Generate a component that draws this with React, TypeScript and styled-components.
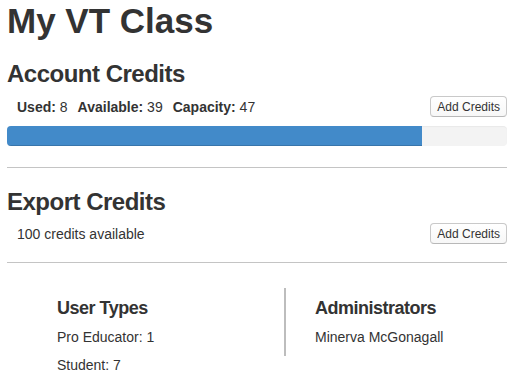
import styled, { createGlobalStyle } from 'styled-components';

const GlobalStyle = createGlobalStyle`
  html, body {
    margin: 0;
    padding: 0;
    background: #fff;
  }
  body {
    font-family: 'Liberation Sans', Arial, sans-serif;
    color: #333;
    font-size: 14px;
  }
`;

const Page = styled.div`
  margin: 0 12px 0 7px;
  padding-top: 1px;
`;

const Title = styled.h1`
  margin: 0;
  font-size: 35px;
  line-height: 40px;
  font-weight: bold;
`;

const SectionTitle = styled.h2<{ $top: number }>`
  margin: ${(p) => p.$top}px 0 0;
  font-size: 24px;
  line-height: 28px;
  font-weight: bold;
  letter-spacing: -0.5px;
`;

const CreditRow = styled.div<{ $top: number }>`
  display: flex;
  align-items: center;
  justify-content: space-between;
  height: 21px;
  margin-top: ${(p) => p.$top}px;
  padding-left: 10px;
`;

const Stats = styled.div`
  display: flex;
  gap: 10px;
  line-height: 20px;
`;

const Stat = styled.span`
  b {
    font-weight: bold;
  }
`;

const AddButton = styled.button`
  height: 21px;
  padding: 0 6px;
  font-family: 'Liberation Sans', Arial, sans-serif;
  font-size: 12px;
  color: #333;
  background: linear-gradient(#ffffff, #f7f7f7);
  border: 1px solid #c9c9c9;
  border-bottom-color: #b8b8b8;
  border-radius: 4px;
  cursor: pointer;
`;

const Progress = styled.div`
  margin-top: 9px;
  height: 20px;
  background: #f3f3f3;
  border-radius: 4px;
  box-shadow: inset 0 1px 1px rgba(0, 0, 0, 0.04);
  overflow: hidden;
`;

const ProgressFill = styled.div`
  height: 100%;
  background: #428ac9;
  box-shadow: inset 0 -1px 0 rgba(0, 0, 0, 0.15);
`;

const Rule = styled.hr<{ $top: number }>`
  margin: ${(p) => p.$top}px 0 0;
  border: 0;
  border-top: 1px solid #c4c4c4;
`;

const PlainText = styled.span`
  line-height: 20px;
`;

const Summary = styled.div`
  display: grid;
  grid-template-columns: 277px 1fr;
  align-items: start;
  margin-top: 25px;
`;

const Column = styled.div<{ $divider?: boolean }>`
  padding: 9px 0 1px ${(p) => (p.$divider ? 29 : 50)}px;
  border-left: ${(p) => (p.$divider ? '2px solid #bdbdbd' : 'none')};
`;

const ColumnTitle = styled.h3`
  margin: 0 0 8px;
  font-size: 18px;
  line-height: 22px;
  font-weight: bold;
  letter-spacing: -0.5px;
`;

const Line = styled.p`
  margin: 0 0 8px;
  line-height: 20px;
`;

const used = 8;
const available = 39;
const capacity = 47;

export default function App() {
  return (
    <>
      <GlobalStyle />
      <Page>
        <Title>My VT Class</Title>

        <SectionTitle $top={19}>Account Credits</SectionTitle>
        <CreditRow $top={8}>
          <Stats>
            <Stat>
              <b>Used:</b> {used}
            </Stat>
            <Stat>
              <b>Available:</b> {available}
            </Stat>
            <Stat>
              <b>Capacity:</b> {capacity}
            </Stat>
          </Stats>
          <AddButton>Add Credits</AddButton>
        </CreditRow>
        <Progress>
          <ProgressFill style={{ width: `${(available / capacity) * 100}%` }} />
        </Progress>

        <Rule $top={21} />

        <SectionTitle $top={20}>Export Credits</SectionTitle>
        <CreditRow $top={7}>
          <PlainText>100 credits available</PlainText>
          <AddButton>Add Credits</AddButton>
        </CreditRow>

        <Rule $top={18} />

        <Summary>
          <Column>
            <ColumnTitle>User Types</ColumnTitle>
            <Line>Pro Educator: 1</Line>
            <Line>Student: 7</Line>
          </Column>
          <Column $divider>
            <ColumnTitle>Administrators</ColumnTitle>
            <Line>Minerva McGonagall</Line>
          </Column>
        </Summary>
      </Page>
    </>
  );
}
